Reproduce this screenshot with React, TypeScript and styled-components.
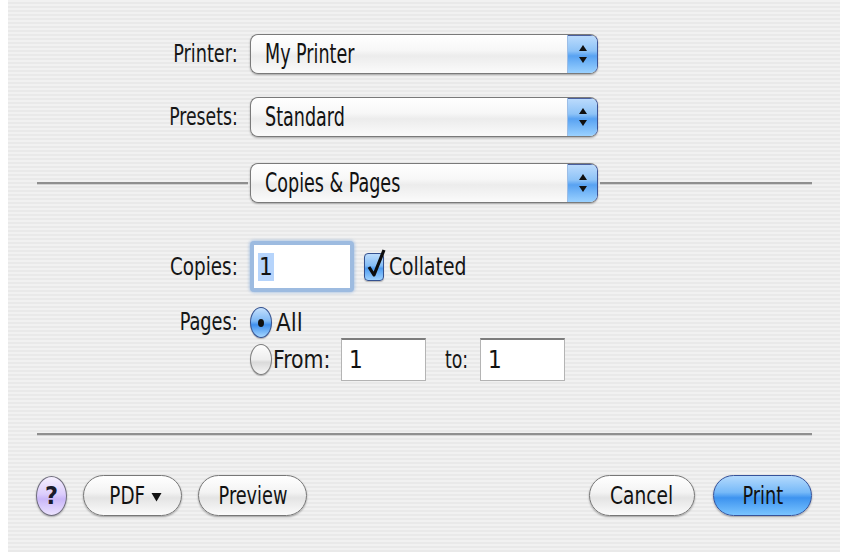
import React from "react";
import styled, { createGlobalStyle, css } from "styled-components";

const FONT = `"DejaVu Sans Condensed", "DejaVu Sans", "Liberation Sans", Arial, sans-serif`;

const GlobalStyle = createGlobalStyle`
  html, body { margin: 0; padding: 0; background: #ffffff; overflow: hidden; }
  body { padding: 0 8px; font-family: ${FONT}; }
  * { box-sizing: border-box; }
`;

const Panel = styled.div`
  width: 832px;
  height: 552px;
  padding-top: 34px;
  display: flex;
  flex-direction: column;
  background: repeating-linear-gradient(
    180deg,
    #f1f1f1 0px,
    #f1f1f1 2px,
    #e9e9e9 2px,
    #e9e9e9 4px
  );
  color: #161616;
  font-size: 24px;
`;

/* Narrow text: the reference face is much more condensed than any installed font */
const Squeeze = styled.span<{ $s?: number; $o?: "left" | "right" | "center" }>`
  display: inline-block;
  white-space: nowrap;
  transform: scaleX(${(p) => p.$s ?? 0.82});
  transform-origin: ${(p) => p.$o ?? "left"} center;
`;

const FormRow = styled.div<{ $top: number }>`
  display: grid;
  grid-template-columns: 230px auto;
  column-gap: 12px;
  align-items: center;
  margin-top: ${(p) => p.$top}px;
`;

const Label = styled.span<{ $start?: boolean }>`
  text-align: right;
  font-size: 24px;
  line-height: ${(p) => (p.$start ? "31px" : "normal")};
  align-self: ${(p) => (p.$start ? "start" : "center")};
  color: #161616;
`;

const PopupBox = styled.div`
  width: 348px;
  height: 40px;
  display: flex;
  align-items: stretch;
  border: 1px solid #7a7a7a;
  border-right-color: #3d5394;
  border-radius: 8px;
  overflow: hidden;
  background: linear-gradient(180deg, #ffffff 0%, #f7f7f7 40%, #ececec 55%, #fbfbfb 100%);
  box-shadow: 0 1px 2px rgba(0, 0, 0, 0.3);
`;

const PopupText = styled.span`
  flex: 1;
  display: flex;
  align-items: center;
  padding-left: 14px;
  font-size: 26px;
  color: #121212;
`;

const Stepper = styled.span`
  width: 30px;
  display: flex;
  align-items: center;
  justify-content: center;
  border-left: 1px solid #9cbde6;
  background: linear-gradient(180deg, #bedcfc 0%, #8ec3f7 42%, #58a2f2 55%, #9ad1ff 100%);
  box-shadow: inset 0 1px 0 #4a5f9e;
`;

const Popup = ({ children }: { children: React.ReactNode }) => (
  <PopupBox>
    <PopupText>
      <Squeeze $s={0.75}>{children}</Squeeze>
    </PopupText>
    <Stepper>
      <svg width="10" height="22" viewBox="0 0 10 22">
        <path d="M5 2 L9 8 L1 8 Z" fill="#111" />
        <path d="M1 14 L9 14 L5 20 Z" fill="#111" />
      </svg>
    </Stepper>
  </PopupBox>
);

const SectionRow = styled.div`
  display: grid;
  grid-template-columns: 211px 348px 1fr;
  column-gap: 2px;
  align-items: center;
  margin-top: 26px;
  padding: 0 28px 0 29px;
`;

const Rule = styled.div`
  height: 2px;
  background: #8f8f8f;
  box-shadow: 0 1px 0 #d2d2d2;
`;

const Inline = styled.div`
  display: flex;
  align-items: center;
`;

const FocusRing = styled.div`
  width: 104px;
  height: 51px;
  padding: 4px;
  border-radius: 4px;
  background: #9dbbe0;
  box-shadow: 0 0 3px 1px rgba(140, 175, 220, 0.6);
`;

const Field = styled.div<{ $w?: number; $focused?: boolean }>`
  width: ${(p) => (p.$focused ? "100%" : `${p.$w}px`)};
  height: ${(p) => (p.$focused ? "100%" : "43px")};
  display: flex;
  align-items: center;
  padding-left: ${(p) => (p.$focused ? 4 : 7)}px;
  background: #ffffff;
  font-size: 24px;
  color: #111;
  ${(p) =>
    !p.$focused &&
    css`
      border: 1px solid #b4b4b4;
      border-top: 2px solid #7c7c7c;
    `}
`;

const Selected = styled.span`
  background: #b6d4fb;
  padding: 0 1px;
`;

const CheckBox = styled.span`
  position: relative;
  width: 20px;
  height: 28px;
  border-radius: 4px;
  border: 1px solid #34518f;
  background: linear-gradient(180deg, #bcdcfc 0%, #84bdf6 45%, #4f9cf0 55%, #9ed2ff 100%);
  margin-left: 10px;
  box-shadow: 0 1px 1px rgba(0, 0, 0, 0.25);
`;

const CheckMark = styled.svg`
  position: absolute;
  left: 0px;
  top: -6px;
`;

const OptionList = styled.div`
  display: flex;
  flex-direction: column;
`;

const Radio = styled.span<{ $on?: boolean }>`
  width: 22px;
  height: 31px;
  flex: none;
  border-radius: 50%;
  display: flex;
  align-items: center;
  justify-content: center;
  border: 1px solid ${(p) => (p.$on ? "#34518f" : "#7e7e7e")};
  background: ${(p) =>
    p.$on
      ? "linear-gradient(180deg, #c4e0fd 0%, #7fb9f6 45%, #3f8fee 58%, #a4d6ff 100%)"
      : "linear-gradient(180deg, #fdfdfd 0%, #eeeeee 50%, #dadada 60%, #f6f6f6 100%)"};
  box-shadow: 0 1px 1px rgba(0, 0, 0, 0.25);
`;

const Dot = styled.span`
  width: 6px;
  height: 8px;
  border-radius: 50%;
  background: #111;
`;

const OptionLine = styled.div<{ $h: number }>`
  height: ${(p) => p.$h}px;
  display: flex;
  align-items: center;
`;

const OptionText = styled.span<{ $ml?: number; $w?: number }>`
  margin-left: ${(p) => p.$ml ?? 4}px;
  ${(p) =>
    p.$w !== undefined &&
    css`
      width: ${p.$w}px;
      flex: none;
    `}
`;

const Separator = styled.div`
  margin: 52px 28px 0 29px;
  height: 2px;
  background: #8f8f8f;
  box-shadow: 0 1px 0 #d2d2d2;
`;

const ButtonBar = styled.div`
  margin-top: 40px;
  padding: 0 28px 0 28px;
  display: flex;
  align-items: center;
`;

const Group = styled.div<{ $gap: number }>`
  display: flex;
  align-items: center;
  gap: ${(p) => p.$gap}px;
`;

const Spacer = styled.div`
  flex: 1;
`;

const HelpButton = styled.span`
  width: 31px;
  height: 40px;
  border-radius: 50%;
  border: 1px solid #6e6c7c;
  background: linear-gradient(180deg, #f6f0ff 0%, #dccdfc 45%, #c9b6f8 58%, #ece3ff 100%);
  box-shadow: 0 1px 2px rgba(0, 0, 0, 0.3);
  display: flex;
  align-items: center;
  justify-content: center;
  font-size: 25px;
  font-weight: bold;
  color: #1b1b2b;
`;

const PillButton = styled.span<{ $w: number; $primary?: boolean }>`
  width: ${(p) => p.$w}px;
  height: 41px;
  border-radius: 21px;
  display: flex;
  align-items: center;
  justify-content: center;
  font-size: 24px;
  color: #111;
  border: 1px solid ${(p) => (p.$primary ? "#36529a" : "#777777")};
  background: ${(p) =>
    p.$primary
      ? "linear-gradient(180deg, #b4dafd 0%, #76b9f8 42%, #3d93ef 56%, #79c4ff 100%)"
      : "linear-gradient(180deg, #ffffff 0%, #f3f3f3 42%, #e4e4e4 56%, #fbfbfb 100%)"};
  box-shadow: 0 1px 2px rgba(0, 0, 0, 0.35);
`;

const ButtonLabel = styled.span`
  display: flex;
  align-items: center;
  gap: 6px;
`;

const Caret = styled.svg`
  display: block;
  margin-top: 2px;
`;

export default function App() {
  return (
    <>
      <GlobalStyle />
      <Panel>
        <FormRow $top={0}>
          <Label>
            <Squeeze $o="right">Printer:</Squeeze>
          </Label>
          <Popup>My Printer</Popup>
        </FormRow>
        <FormRow $top={23}>
          <Label>
            <Squeeze $o="right" $s={0.8}>Presets:</Squeeze>
          </Label>
          <Popup>Standard</Popup>
        </FormRow>
        <SectionRow>
          <Rule />
          <Popup>Copies &amp; Pages</Popup>
          <Rule />
        </SectionRow>

        <FormRow $top={38}>
          <Label>
            <Squeeze $o="right" $s={0.85}>Copies:</Squeeze>
          </Label>
          <Inline>
            <FocusRing>
              <Field $focused>
                <Selected>1</Selected>
              </Field>
            </FocusRing>
            <CheckBox>
              <CheckMark width="22" height="32" viewBox="0 0 22 32">
                <path d="M4 19 L9 27 L19 2" fill="none" stroke="#0d0d0d" strokeWidth="3.2" strokeLinejoin="round" />
              </CheckMark>
            </CheckBox>
            <OptionText $ml={5}>
              <Squeeze $s={0.87}>Collated</Squeeze>
            </OptionText>
          </Inline>
        </FormRow>

        <FormRow $top={15}>
          <Label $start>
            <Squeeze $o="right">Pages:</Squeeze>
          </Label>
          <OptionList>
            <OptionLine $h={31}>
              <Radio $on>
                <Dot />
              </Radio>
              <OptionText>
                <Squeeze $s={1}>All</Squeeze>
              </OptionText>
            </OptionLine>
            <OptionLine $h={43}>
              <Radio />
              <OptionText $ml={1} $w={68}>
                <Squeeze $s={0.95}>From:</Squeeze>
              </OptionText>
              <Field $w={85}>1</Field>
              <OptionText $ml={19} $w={35}>
                <Squeeze $s={0.8}>to:</Squeeze>
              </OptionText>
              <Field $w={85}>1</Field>
            </OptionLine>
          </OptionList>
        </FormRow>

        <Separator />

        <ButtonBar>
          <Group $gap={16}>
            <HelpButton>?</HelpButton>
            <PillButton $w={99}>
              <ButtonLabel>
                <Squeeze $o="right" $s={0.85}>PDF</Squeeze>
                <Caret width="11" height="10" viewBox="0 0 11 10">
                  <path d="M0.5 1 L10.5 1 L5.5 9.5 Z" fill="#111" />
                </Caret>
              </ButtonLabel>
            </PillButton>
            <PillButton $w={109}>
              <Squeeze $o="center">Preview</Squeeze>
            </PillButton>
          </Group>
          <Spacer />
          <Group $gap={18}>
            <PillButton $w={106}>
              <Squeeze $o="center" $s={0.86}>Cancel</Squeeze>
            </PillButton>
            <PillButton $w={99} $primary>
              <Squeeze $o="center">Print</Squeeze>
            </PillButton>
          </Group>
        </ButtonBar>
      </Panel>
    </>
  );
}
